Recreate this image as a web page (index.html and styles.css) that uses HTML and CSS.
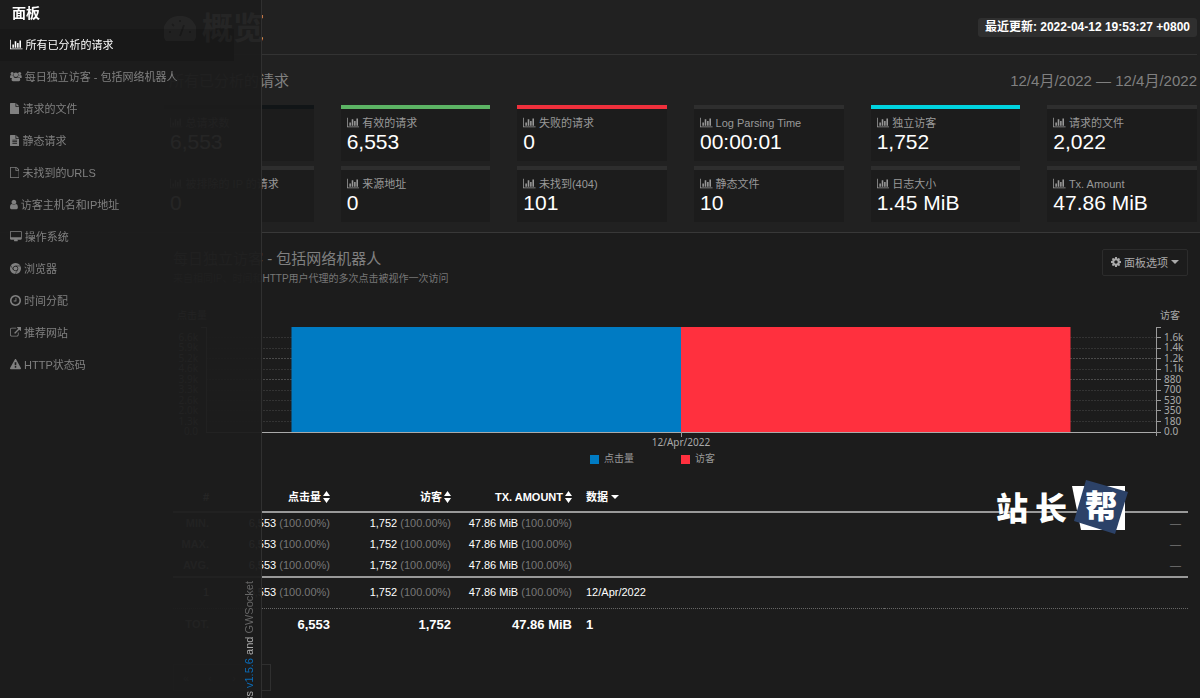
FILE: index.html
```html
<!DOCTYPE html>
<html lang="zh-CN">
<head>
<meta charset="utf-8">
<title>概览</title>
<link rel="stylesheet" href="styles.css">
</head>
<body>
<svg class="defs" aria-hidden="true">
  <defs>
    <path id="i-bar" d="M640 896v512h-256v-512h256zm384-512v1024h-256v-1024h256zm1024 1152v128h-2048v-1536h128v1408h1920zm-640-896v768h-256v-768h256zm384-384v1152h-256v-1152h256z"/>
    <g id="i-users"><circle cx="350" cy="400" r="250"/><circle cx="1570" cy="400" r="250"/><circle cx="960" cy="620" r="370"/><path d="M0 1000q0-340 180-360 180 110 380 20-20 240 100 370-150 10-240 130h-230q-190 0-190-160zM1920 1000q0-340-180-360-180 110-380 20 20 240-100 370 150 10 240 130h230q190 0 190-160zM250 1420q0-400 260-430 450 300 900 0 260 30 260 430 0 244-230 244h-960q-230 0-230-244z"/></g>
    <path id="i-file" d="M1152 512v-472q22 14 36 28l408 408q14 14 28 36h-472zm-128 32q0 40 28 68t68 28h544v1056q0 40-28 68t-68 28h-1344q-40 0-68-28t-28-68v-1600q0-40 28-68t68-28h800v544z"/>
    <path id="i-filetext" d="M1596 476q14 14 28 36h-472v-472q22 14 36 28zm-476 164h544v1056q0 40-28 68t-68 28h-1344q-40 0-68-28t-28-68v-1600q0-40 28-68t68-28h800v544q0 40 28 68t68 28zm160 736v-64q0-14-9-23t-23-9h-704q-14 0-23 9t-9 23v64q0 14 9 23t23 9h704q14 0 23-9t9-23zm0-256v-64q0-14-9-23t-23-9h-704q-14 0-23 9t-9 23v64q0 14 9 23t23 9h704q14 0 23-9t9-23zm0-256v-64q0-14-9-23t-23-9h-704q-14 0-23 9t-9 23v64q0 14 9 23t23 9h704q14 0 23-9t9-23z"/>
    <path id="i-fileo" d="M1596 380q28 28 48 76t20 88v1152q0 40-28 68t-68 28h-1344q-40 0-68-28t-28-68v-1600q0-40 28-68t68-28h896q40 0 88 20t76 48zm-444-244v376h376q-10-29-22-41l-313-313q-12-12-41-22zm384 1528v-1024h-416q-40 0-68-28t-28-68v-416h-768v1536h1280z"/>
    <path id="i-user" d="M1536 1399q0 109-62.5 187t-150.5 78h-854q-88 0-150.5-78t-62.5-187q0-85 8.5-160.5t31.5-152 58.5-131 94-89 134.5-34.5q131 128 313 128t313-128q76 0 134.5 34.5t94 89 58.5 131 31.5 152 8.5 160.5zm-256-887q0 159-112.5 271.5t-271.5 112.5-271.5-112.5-112.5-271.5 112.5-271.5 271.5-112.5 271.5 112.5 112.5 271.5z"/>
    <path id="i-desktop" d="M1856 992v-832q0-13-9.500-22.500t-22.500-9.500h-1600q-13 0-22.500 9.500t-9.500 22.500v832q0 13 9.500 22.500t22.500 9.500h1600q13 0 22.500-9.500t9.500-22.500zm128-832v1088q0 66-47 113t-113 47h-544q0 37 16 77.500t32 71 16 43.500q0 26-19 45t-45 19h-512q-26 0-45-19t-19-45q0-14 16-44t32-70 16-78h-544q-66 0-113-47t-47-113v-1088q0-66 47-113t113-47h1600q66 0 113 47t47 113z"/>
    <g id="i-chrome"><path fill-rule="evenodd" d="M896 0a896 896 0 1 0 1 0zM896 450a446 446 0 1 1-1 0z"/><circle cx="896" cy="896" r="330"/><path class="cut" d="M896 480h800M530 1110l-400-700M1260 1120l-420 660"/></g>
    <path id="i-clock" d="M1024 544v448q0 14-9 23t-23 9h-320q-14 0-23-9t-9-23v-64q0-14 9-23t23-9h224v-352q0-14 9-23t23-9h64q14 0 23 9t9 23zm416 352q0-148-73-273t-198-198-273-73-273 73-198 198-73 273 73 273 198 198 273 73 273-73 198-198 73-273zm224 0q0 209-103 385.500t-279.500 279.500-385.500 103-385.500-103-279.500-279.500-103-385.500 103-385.500 279.500-279.500 385.500-103 385.500 103 279.500 279.500 103 385.500z"/>
    <path id="i-link" d="M1408 928v320q0 119-84.500 203.500t-203.500 84.500h-832q-119 0-203.500-84.500t-84.500-203.500v-832q0-119 84.500-203.500t203.500-84.500h704q14 0 23 9t9 23v64q0 14-9 23t-23 9h-704q-66 0-113 47t-47 113v832q0 66 47 113t113 47h832q66 0 113-47t47-113v-320q0-14 9-23t23-9h64q14 0 23 9t9 23zm384-864v512q0 26-19 45t-45 19-45-19l-176-176-652 652q-10 10-23 10t-23-10l-114-114q-10-10-10-23t10-23l652-652-176-176q-19-19-19-45t19-45 45-19h512q26 0 45 19t19 45z"/>
    <path id="i-warn" d="M1024 1375v-190q0-14-9.500-23.500t-22.500-9.500h-192q-13 0-22.500 9.500t-9.500 23.500v190q0 14 9.500 23.500t22.500 9.500h192q13 0 22.500-9.500t9.500-23.500zm-2-374l18-459q0-12-10-19-13-11-24-11h-220q-11 0-24 11-10 7-10 21l17 457q0 10 10 16.500t24 6.500h185q14 0 23.500-6.500t10.500-16.500zm-14-934l768 1408q35 63-2 126-17 29-46.500 46t-63.500 17h-1536q-34 0-63.500-17t-46.500-46q-37-63-2-126l768-1408q17-31 47-49t65-18 65 18 47 49z"/>
    <path id="i-cog" d="M1152 896q0-106-75-181t-181-75-181 75-75 181 75 181 181 75 181-75 75-181zm512-109v222q0 12-8 23t-20 13l-185 28q-19 54-39 91 35 50 107 138 10 12 10 25t-9 23q-27 37-99 108t-94 71q-12 0-26-9l-138-108q-44 23-91 38-16 136-29 186-7 28-36 28h-222q-14 0-24.5-8.500t-11.500-21.500l-28-184q-49-16-90-37l-141 107q-10 9-25 9-14 0-25-11-126-114-165-168-7-10-7-23 0-12 8-23 15-21 51-66.500t54-70.500q-27-50-41-99l-183-27q-13-2-21-12.500t-8-23.500v-222q0-12 8-23t19-13l186-28q14-46 39-92-40-57-107-138-10-12-10-24 0-10 9-23 26-36 98.500-107.500t94.500-71.500q13 0 26 10l138 107q44-23 91-38 16-136 29-186 7-28 36-28h222q14 0 24.500 8.500t11.500 21.500l28 184q49 16 90 37l142-107q9-9 24-9 13 0 25 10 129 119 165 170 7 8 7 22 0 12-8 23-15 21-51 66.500t-54 70.500q26 50 41 98l183 28q13 2 21 12.500t8 23.500z"/>
    <path id="i-sort" d="M0 5h7L3.500 0zM0 7h7L3.500 12z"/>
    <path id="i-caret" d="M0 0h8L4 4z"/>
  </defs>
</svg>

<nav class="nav">
  <h3 class="nav-title">面板</h3>
  <ul class="nav-list">
    <li><a class="active" href="#general"><svg class="icon" viewBox="0 0 2048 1792"><use href="#i-bar"/></svg>所有已分析的请求</a></li>
    <li><a href="#visitors"><svg class="icon" viewBox="0 0 1920 1792"><use href="#i-users"/></svg>每日独立访客 - 包括网络机器人</a></li>
    <li><a href="#requests"><svg class="icon" viewBox="128 0 1536 1792"><use href="#i-file"/></svg>请求的文件</a></li>
    <li><a href="#static"><svg class="icon" viewBox="128 0 1536 1792"><use href="#i-filetext"/></svg>静态请求</a></li>
    <li><a href="#notfound"><svg class="icon" viewBox="128 0 1536 1792"><use href="#i-fileo"/></svg>未找到的URLS</a></li>
    <li><a href="#hosts"><svg class="icon" viewBox="256 0 1280 1792"><use href="#i-user"/></svg>访客主机名和IP地址</a></li>
    <li><a href="#os"><svg class="icon" viewBox="64 0 1920 1792"><use href="#i-desktop"/></svg>操作系统</a></li>
    <li><a href="#browsers"><svg class="icon" viewBox="0 0 1792 1792"><use href="#i-chrome"/></svg>浏览器</a></li>
    <li><a href="#time"><svg class="icon" viewBox="128 128 1536 1536"><use href="#i-clock"/></svg>时间分配</a></li>
    <li><a href="#referrers"><svg class="icon" viewBox="0 0 1792 1792"><use href="#i-link"/></svg>推荐网站</a></li>
    <li><a href="#status"><svg class="icon" viewBox="0 0 1792 1792"><use href="#i-warn"/></svg>HTTP状态码</a></li>
  </ul>
  <footer class="credit">by <a href="#goaccess">GoAccess</a> <a class="version" href="#version">v1.5.6</a> and <a class="socket" href="#gwsocket">GWSocket</a></footer>
</nav>

<header class="top">
  <div class="bar">
    <h1><svg viewBox="0 0 32 26"><path d="M16 0A16 16 0 0 0 2 25h28A16 16 0 0 0 16 0z"/><path class="needle" d="M16 20l4-11M5 16h2M25 16h2M8 8l2 2M16 4v2"/></svg>概览</h1>
    <span class="updated">最近更新: 2022-04-12 19:53:27 +0800</span>
  </div>
  <section id="general">
    <div class="general-head"><h2>所有已分析的请求</h2><h2>12/4月/2022 — 12/4月/2022</h2></div>
    <div class="cards">
      <div class="card black"><h4><svg class="icon" viewBox="0 0 2048 1792"><use href="#i-bar"/></svg>总请求数</h4><p>6,553</p></div>
      <div class="card green"><h4><svg class="icon" viewBox="0 0 2048 1792"><use href="#i-bar"/></svg>有效的请求</h4><p>6,553</p></div>
      <div class="card red"><h4><svg class="icon" viewBox="0 0 2048 1792"><use href="#i-bar"/></svg>失败的请求</h4><p>0</p></div>
      <div class="card"><h4><svg class="icon" viewBox="0 0 2048 1792"><use href="#i-bar"/></svg>Log Parsing Time</h4><p>00:00:01</p></div>
      <div class="card cyan"><h4><svg class="icon" viewBox="0 0 2048 1792"><use href="#i-bar"/></svg>独立访客</h4><p>1,752</p></div>
      <div class="card"><h4><svg class="icon" viewBox="0 0 2048 1792"><use href="#i-bar"/></svg>请求的文件</h4><p>2,022</p></div>
      <div class="card"><h4><svg class="icon" viewBox="0 0 2048 1792"><use href="#i-bar"/></svg>被排除的 IP 的请求</h4><p>0</p></div>
      <div class="card"><h4><svg class="icon" viewBox="0 0 2048 1792"><use href="#i-bar"/></svg>来源地址</h4><p>0</p></div>
      <div class="card"><h4><svg class="icon" viewBox="0 0 2048 1792"><use href="#i-bar"/></svg>未找到(404)</h4><p>101</p></div>
      <div class="card"><h4><svg class="icon" viewBox="0 0 2048 1792"><use href="#i-bar"/></svg>静态文件</h4><p>10</p></div>
      <div class="card"><h4><svg class="icon" viewBox="0 0 2048 1792"><use href="#i-bar"/></svg>日志大小</h4><p>1.45 MiB</p></div>
      <div class="card"><h4><svg class="icon" viewBox="0 0 2048 1792"><use href="#i-bar"/></svg>Tx. Amount</h4><p>47.86 MiB</p></div>
    </div>
  </section>
</header>

<main class="panel" id="visitors">
  <div class="panel-head">
    <div>
      <h2>每日独立访客 - 包括网络机器人</h2>
      <p>来自相同IP、时间和HTTP用户代理的多次点击被视作一次访问</p>
    </div>
    <button class="options" type="button"><svg class="icon" viewBox="128 128 1536 1536"><use href="#i-cog"/></svg>面板选项<svg class="caret" viewBox="0 0 8 4"><use href="#i-caret"/></svg></button>
  </div>

  <div class="chart">
    <svg class="plot" role="img" aria-label="点击量 / 访客 12/Apr/2022">
      <g class="grid">
        <line x1="0" x2="100%" y1="37" y2="37"/><line x1="0" x2="100%" y1="48" y2="48"/><line class="strong" x1="0" x2="100%" y1="58" y2="58"/><line x1="0" x2="100%" y1="69" y2="69"/><line class="strong" x1="0" x2="100%" y1="79" y2="79"/><line x1="0" x2="100%" y1="90" y2="90"/><line x1="0" x2="100%" y1="100" y2="100"/><line x1="0" x2="100%" y1="110" y2="110"/><line x1="0" x2="100%" y1="121" y2="121"/>
      </g>
      <rect class="blue" x="9%" y="27" width="41%" height="105"/>
      <rect class="pink" x="50%" y="27" width="41%" height="105"/>
      <svg x="0" y="0" width="1" height="140" overflow="visible">
        <path class="axis" d="M-5 27h5v105"/>
        <g class="end"><text x="1" y="19">点击量</text><text x="-8" y="41">6.6k</text><text x="-8" y="51">5.9k</text><text x="-8" y="62">5.2k</text><text x="-8" y="72">4.6k</text><text x="-8" y="83">3.9k</text><text x="-8" y="93">3.3k</text><text x="-8" y="104">2.6k</text><text x="-8" y="114">2.0k</text><text x="-8" y="125">1.3k</text><text x="-8" y="135">0.0</text></g>
      </svg>
      <line class="base" x1="0" x2="100%" y1="132" y2="132"/>
      <line class="mark" x1="50%" x2="50%" y1="132" y2="137"/>
      <svg x="100%" y="0" width="1" height="140" overflow="visible">
        <path class="axis" d="M5 27h-5v109M0 37h5M0 48h5M0 58h5M0 69h5M0 79h5M0 90h5M0 100h5M0 110h5M0 121h5M0 132h5"/>
        <text x="4" y="19">访客</text><text x="8" y="41">1.6k</text><text x="8" y="51">1.4k</text><text x="8" y="62">1.2k</text><text x="8" y="72">1.1k</text><text x="8" y="83">880</text><text x="8" y="93">700</text><text x="8" y="104">530</text><text x="8" y="114">350</text><text x="8" y="125">180</text><text x="8" y="135">0.0</text>
      </svg>
      <text class="middle" x="50%" y="146">12/Apr/2022</text>
    </svg>
    <div class="legend"><span class="key-blue">点击量</span><span class="key-pink">访客</span></div>
  </div>

  <table>
    <thead>
      <tr><th class="c-num">#</th><th class="c-val"><button type="button">点击量<svg class="sort" viewBox="0 0 7 12"><use href="#i-sort"/></svg></button></th><th class="c-val"><button type="button">访客<svg class="sort" viewBox="0 0 7 12"><use href="#i-sort"/></svg></button></th><th class="c-val"><button type="button">TX. AMOUNT<svg class="sort" viewBox="0 0 7 12"><use href="#i-sort"/></svg></button></th><th class="left"><button type="button">数据<svg class="caret" viewBox="0 0 8 4"><use href="#i-caret"/></svg></button></th><th></th></tr>
    </thead>
    <tbody class="meta">
      <tr><th>MIN.</th><td>6,553 <i>(100.00%)</i></td><td>1,752 <i>(100.00%)</i></td><td>47.86 MiB <i>(100.00%)</i></td><td></td><td><i>—</i></td></tr>
      <tr><th>MAX.</th><td>6,553 <i>(100.00%)</i></td><td>1,752 <i>(100.00%)</i></td><td>47.86 MiB <i>(100.00%)</i></td><td></td><td><i>—</i></td></tr>
      <tr><th>AVG.</th><td>6,553 <i>(100.00%)</i></td><td>1,752 <i>(100.00%)</i></td><td>47.86 MiB <i>(100.00%)</i></td><td></td><td><i>—</i></td></tr>
    </tbody>
    <tbody class="data">
      <tr><td>1</td><td>6,553 <i>(100.00%)</i></td><td>1,752 <i>(100.00%)</i></td><td>47.86 MiB <i>(100.00%)</i></td><td class="left">12/Apr/2022</td><td></td></tr>
    </tbody>
    <tfoot>
      <tr><th>TOT.</th><td>6,553</td><td>1,752</td><td>47.86 MiB</td><td class="left">1</td><td></td></tr>
    </tfoot>
  </table>

  <div class="pager"><button type="button" aria-label="首页">«</button><button type="button" aria-label="上一页">‹</button><button type="button" aria-label="下一页">›</button><button type="button" aria-label="末页"></button></div>
</main>

<svg class="watermark" viewBox="0 0 136 60" role="img" aria-label="站长帮">
  <path class="paper" d="M77 9h53v44H86z"/>
  <path class="tile" d="M91 3l42 12-13 42-41-13z"/>
  <text x="1" y="43">站</text><text x="40" y="43">长</text><text x="90" y="41">帮</text>
</svg>
</body>
</html>
```

FILE: styles.css
```css
* { box-sizing: border-box; }
body {
  margin: 0;
  background: #1c1c1c;
  color: #fff;
  font: 11px/20px "Liberation Sans", "Noto Sans CJK SC", sans-serif;
}
h1, h2, h3, h4, p, ul { margin: 0; padding: 0; font-weight: normal; }
a { color: inherit; text-decoration: none; }
i { font-style: normal; color: #777; }
button { font: inherit; color: inherit; background: none; border: 0; padding: 0; }
svg { fill: currentColor; }
.defs { position: absolute; width: 0; height: 0; }
.icon { height: 11px; width: auto; margin: 0 3px 2px 0; flex: none; }
.cut { stroke: #1c1c1c; stroke-width: 90; fill: none; }

.nav {
  position: fixed;
  z-index: 2;
  top: 0;
  bottom: 0;
  left: 0;
  width: 262px;
  overflow: hidden;
  display: flex;
  flex-direction: column;
  background: rgba(28, 28, 28, .96);
  border-right: 1px solid #303030;
  color: #808080;
}
.nav-title {
  padding: 3px 12px 6px;
  color: #fff;
  font-size: 14px;
  font-weight: bold;
}
.nav-list { list-style: none; }
.nav-list a {
  display: flex;
  align-items: center;
  height: 32px;
  margin-right: 27px;
  padding-left: 10px;
}
.nav-list .active { background: rgba(0, 0, 0, .12); color: #fff; }
.credit {
  align-self: flex-end;
  flex: none;
  margin-top: 200px;
  margin-right: 2px;
  writing-mode: vertical-rl;
  transform: rotate(180deg);
  white-space: nowrap;
  color: #aaa;
}
.credit .version { color: #0b6cb8; }
.credit .socket { color: #666; }

.top {
  padding: 0 3px 10px 164px;
  background: #212121;
  border-bottom: 1px solid #383838;
}
.bar {
  display: flex;
  align-items: center;
  justify-content: space-between;
  height: 55px;
  border-bottom: 1px solid #333;
}
h1 {
  display: flex;
  align-items: center;
  gap: 6px;
  padding-top: 4px;
  font-size: 31px;
  line-height: 50px;
  font-weight: bold;
}
h1 svg { width: 32px; height: 26px; }
.needle { stroke: #212121; stroke-width: 2; fill: none; }
.updated {
  padding: 0 7px;
  border-radius: 3px;
  background: #2f2f2f;
  font-size: 12px;
  line-height: 19px;
  font-weight: bold;
}
h2 { font-size: 15px; color: #808080; }
.general-head {
  display: flex;
  justify-content: space-between;
  align-items: center;
  height: 50px;
  padding: 2px 0 0 5px;
}
.cards {
  display: grid;
  grid-template-columns: repeat(6, 1fr);
  gap: 5px 27px;
}
.card {
  height: 56px;
  padding: 4px 6px 0;
  background: #1c1c1c;
  border-top: 4px solid #2e2e2e;
}
.black { border-color: #111517; }
.green { border-color: #5cb464; }
.red { border-color: #f0303c; }
.cyan { border-color: #00d4e0; }
.card h4 {
  display: flex;
  align-items: center;
  color: #999;
  font-size: 11px;
  white-space: nowrap;
}
.card p { font-size: 21px; line-height: 18px; }

.panel { padding: 16px 12px 0 173px; }
.panel-head { display: flex; justify-content: space-between; align-items: flex-start; }
.panel-head p { color: #777; font-size: 10px; }
.options {
  display: flex;
  align-items: center;
  height: 27px;
  padding: 0 8px;
  border: 1px solid #2c2c2c;
  border-radius: 2px;
  color: #aaa;
}
.options .icon { height: 10px; }
.caret { width: 8px; height: 4px; margin: 0 0 1px 3px; }
.sort { width: 7px; height: 12px; margin-left: 2px; }

.chart { padding: 11px 32px 0 33px; }
.plot { display: block; width: 100%; height: 149px; overflow: visible; font-size: 10px; fill: #aaa; }
.plot svg { fill: #aaa; font-family: "Noto Sans", "Noto Sans CJK SC", sans-serif; }
.grid line { stroke: #333; stroke-dasharray: 2 1; shape-rendering: crispEdges; }
.grid .strong { stroke: #4a4a4a; }
.axis, .mark { stroke: #999; fill: none; shape-rendering: crispEdges; }
.base { stroke: #aaa; stroke-width: 1; shape-rendering: crispEdges; }
.blue { fill: #007bc3; }
.pink { fill: #ff303e; }
.end { text-anchor: end; }
.middle { text-anchor: middle; font-family: "Noto Sans", sans-serif; }
.legend {
  display: grid;
  grid-template-columns: 91px 91px;
  justify-content: center;
  color: #999;
  font-size: 10px;
}
.legend span { display: flex; align-items: center; gap: 5px; }
.legend span::before { content: ""; width: 9px; height: 9px; }
.key-blue::before { background: #007bc3; }
.key-pink::before { background: #ff303e; }

table {
  width: 100%;
  margin-top: 14px;
  table-layout: fixed;
  border-collapse: collapse;
  line-height: 15px;
}
th, td { padding: 3px 7px; text-align: right; white-space: nowrap; }
.c-num { width: 43px; }
.c-val { width: 121px; }
.left { text-align: left; }
thead th { height: 29px; padding: 0 7px; border-bottom: 2px solid #999; }
thead button { display: inline-flex; align-items: center; font-weight: bold; }
.meta { border-bottom: 2px solid #999; }
.meta th, tfoot th { font-weight: bold; color: #aaa; }
.data td { height: 31px; border-bottom: 1px dotted #666; }
tfoot td { height: 32px; font-size: 13px; font-weight: bold; }

.pager {
  display: inline-flex;
  margin-top: 24px;
  border: 1px solid #2f2f2f;
}
.pager button { width: 24px; height: 25px; color: #888; }

.watermark {
  position: absolute;
  z-index: 3;
  top: 477px;
  right: 69px;
  width: 136px;
  height: 60px;
  fill: #fff;
  font: 900 32px "Noto Sans CJK SC", sans-serif;
}
.tile { fill: #2c4268; }
```
